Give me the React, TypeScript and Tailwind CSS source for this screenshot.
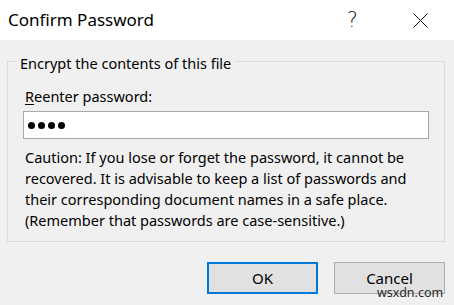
const font = { fontFamily: '"Noto Sans", "Open Sans", Arial, sans-serif' };

function Dots({ count }: { count: number }) {
  return (
    <div className="flex items-center gap-[3px]">
      {Array.from({ length: count }).map((_, i) => (
        <span key={i} className="block h-[7px] w-[7px] rounded-full bg-black" />
      ))}
    </div>
  );
}

export default function App() {
  return (
    <div
      className="relative flex h-[305px] w-[454px] flex-col overflow-hidden bg-[#f0f0f0] text-black"
      style={font}
    >
      <div className="flex h-[40px] items-center bg-white">
        <span className="pl-[8px] text-[17px] leading-[22px]">Confirm Password</span>
        <span
          className="ml-auto mr-[55px] text-[21px] font-extralight leading-none text-[#222]"
          style={{ fontFamily: '"DejaVu Sans", sans-serif' }}
        >
          ?
        </span>
        <svg className="mr-[26px] h-[15px] w-[15px]" viewBox="0 0 15 15" fill="none" stroke="#111" strokeWidth="1">
          <path d="M0.5 0.5 L14.5 14.5 M14.5 0.5 L0.5 14.5" />
        </svg>
      </div>

      <fieldset className="ml-[7px] mt-[9px] w-[438px] border border-[#dcdcdc] pb-[10px]">
        <legend className="ml-[9px] px-[3px] pt-[4px] text-[14.5px] leading-[20px]">
          Encrypt the contents of this file
        </legend>
        <div className="px-[15px]">
          <div className="mt-[13px] pl-[2px] text-[14.5px] leading-[20px]">
            <span className="underline decoration-1 underline-offset-2">R</span>eenter password:
          </div>
          <div className="mt-[5px] flex h-[28px] w-[406px] items-center border border-[#a8a8a8] bg-white pl-[4px]">
            <Dots count={4} />
          </div>
          <p className="mt-[8px] pl-[2px] text-[14.5px] leading-[21px]">
            Caution: If you lose or forget the password, it cannot be recovered. It is advisable to keep a
            list of passwords and their corresponding document names in a safe place. (Remember that
            passwords are case-sensitive.)
          </p>
        </div>
      </fieldset>

      <div className="mt-[20px] flex justify-end gap-[16px] pr-[9px]">
        <button className="h-[32px] w-[111px] border-2 border-[#0078d7] bg-[#e1e1e1] text-[15px]">
          OK
        </button>
        <button className="h-[32px] w-[111px] border border-[#adadad] bg-[#e1e1e1] text-[15px]">
          Cancel
        </button>
      </div>

      <span className="absolute left-[377px] top-[286px] text-[12.5px] leading-[14px] text-[#2a2a2a]">
        wsxdn.com
      </span>
    </div>
  );
}
